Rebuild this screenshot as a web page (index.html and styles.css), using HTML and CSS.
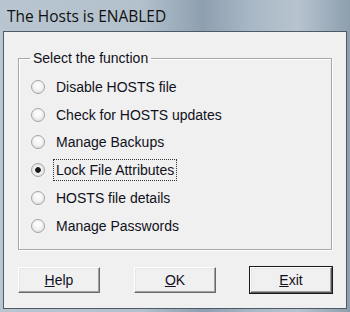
FILE: index.html
```html
<!DOCTYPE html>
<html lang="en">
<head>
  <meta charset="UTF-8">
  <title>The Hosts is ENABLED</title>
  <link rel="stylesheet" href="styles.css">
</head>
<body>

  <div class="janela">
    <div class="titulo">The Hosts is ENABLED</div>

    <div class="cliente">
      <fieldset class="grupo">
        <legend>Select the function</legend>

        <div class="opcao"><span class="radio"></span><span class="rotulo">Disable HOSTS file</span></div>
        <div class="opcao"><span class="radio"></span><span class="rotulo">Check for HOSTS updates</span></div>
        <div class="opcao"><span class="radio"></span><span class="rotulo">Manage Backups</span></div>
        <div class="opcao"><span class="radio marcado"></span><span class="rotulo foco">Lock File Attributes</span></div>
        <div class="opcao"><span class="radio"></span><span class="rotulo">HOSTS file details</span></div>
        <div class="opcao"><span class="radio"></span><span class="rotulo">Manage Passwords</span></div>
      </fieldset>

      <div class="botoes">
        <button class="botao"><u>H</u>elp</button>
        <button class="botao"><u>O</u>K</button>
        <button class="botao padrao"><u>E</u>xit</button>
      </div>
    </div>
  </div>

</body>
</html>
```

FILE: styles.css
```css
body {
  margin: 0;
  font-family: 'Liberation Sans', Arial, sans-serif;
}
.janela {
  width: 350px;
  height: 312px;
  display: flex;
  flex-direction: column;
  background: linear-gradient(90deg, #b9c6d1 0%, #b3c1cd 40%, #8e9fb0 58%, #a9b8c6 72%, #b7c4cf 85%, #8d9eae 100%);
}
.titulo {
  height: 31px;
  padding-left: 7px;
  display: flex;
  align-items: center;
  font-family: 'Open Sans', 'Liberation Sans', sans-serif;
  font-size: 15.5px;
  color: #101010;
}
.cliente {
  flex: 1;
  margin: 0 3px 3px 3px;
  background-color: #f0f0f0;
  border: 1px solid #4e5a66;
  padding: 18px 14px 0 14px;
}
.grupo {
  margin: 0;
  padding: 7px 0 9px 12px;
  border: 1px solid #a9a9a9;
  box-shadow: inset 1px 1px 0 #fff, 1px 1px 0 #fff;
  height: 200px;
  box-sizing: border-box;
}
.grupo legend {
  margin-left: -1px;
  padding: 0 3px;
  font-size: 14px;
  color: #101020;
}
.opcao {
  height: 27.8px;
  display: flex;
  align-items: center;
  font-size: 14px;
  color: #101020;
}
.radio {
  width: 12px;
  height: 12px;
  border-radius: 50%;
  border: 1px solid #a4a4a4;
  background: radial-gradient(circle at 50% 40%, #ffffff 0%, #f4f4f4 45%, #d4d4d4 100%);
  margin-right: 8px;
  flex-shrink: 0;
}
.radio.marcado {
  background: radial-gradient(circle, #111 0, #222 2.5px, #f4f4f4 3.2px, #d4d4d4 100%);
}
.rotulo {
  padding: 2px 2px;
  border: 1px dotted transparent;
}
.rotulo.foco {
  border-color: #333;
}
.botoes {
  margin-top: 17px;
  display: flex;
  justify-content: space-between;
}
.botao {
  width: 82px;
  height: 26px;
  padding: 0;
  background-color: #f0f0f0;
  border: 1px solid;
  border-color: #ffffff #6a6a6a #6a6a6a #ffffff;
  box-shadow: inset -1px -1px 0 #a0a0a0, inset 1px 1px 0 #e6e6e6;
  font-family: 'Liberation Sans', Arial, sans-serif;
  font-size: 14px;
  color: #101020;
}
.botao.padrao {
  outline: 1px solid #1a1a1a;
  outline-offset: 0;
  border-color: #ffffff #555 #555 #ffffff;
}
```
